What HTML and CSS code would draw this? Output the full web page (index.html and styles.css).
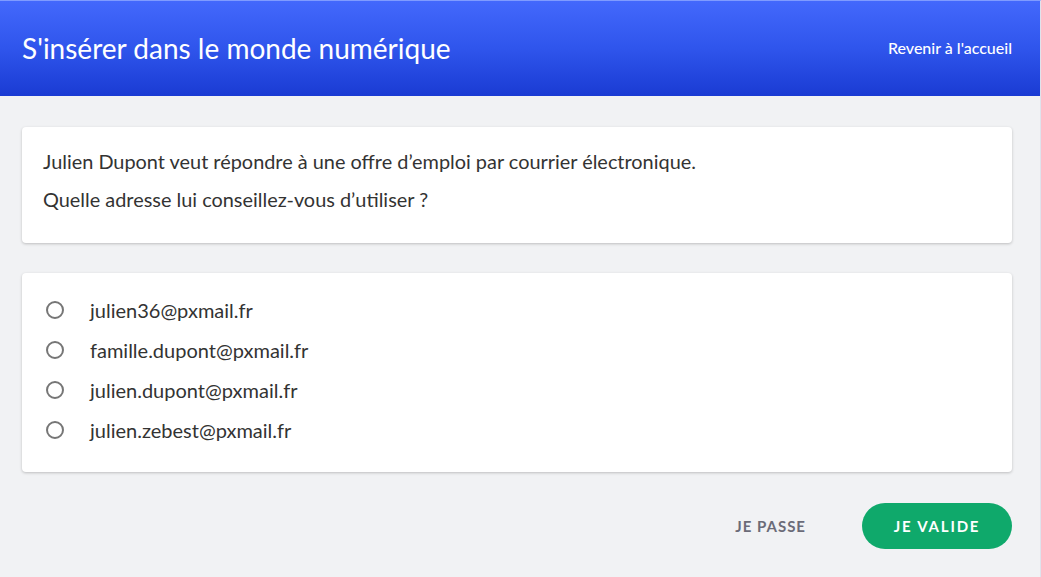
FILE: index.html
```html
<!DOCTYPE html>
<html lang="fr">
<head>
<meta charset="utf-8">
<title>S'insérer dans le monde numérique</title>
<link rel="stylesheet" href="styles.css">
</head>
<body>
<header class="topbar">
  <h1 class="topbar-title">S'insérer dans le monde numérique</h1>
  <a class="topbar-link" href="#">Revenir à l'accueil</a>
</header>
<main class="content">
  <section class="card question">
    <p>Julien Dupont veut répondre à une offre d’emploi par courrier électronique.</p>
    <p>Quelle adresse lui conseillez-vous d’utiliser ?</p>
  </section>
  <section class="card answers">
    <label class="option"><span class="radio"></span><span class="option-text">julien36@pxmail.fr</span></label>
    <label class="option"><span class="radio"></span><span class="option-text">famille.dupont@pxmail.fr</span></label>
    <label class="option"><span class="radio"></span><span class="option-text">julien.dupont@pxmail.fr</span></label>
    <label class="option"><span class="radio"></span><span class="option-text">julien.zebest@pxmail.fr</span></label>
  </section>
  <div class="actions">
    <button class="btn-skip">JE PASSE</button>
    <button class="btn-validate">JE VALIDE</button>
  </div>
</main>
</body>
</html>
```
FILE: styles.css
```css
* { box-sizing: border-box; }
html, body { margin: 0; padding: 0; }
body {
  font-family: Lato, "Open Sans", sans-serif;
  background: #f1f2f4;
  color: #333333;
  width: 1041px;
  height: 577px;
  overflow: hidden;
  border-top: 1px solid #7f9bff;
  border-right: 1px solid #dfe3ec;
}
.topbar {
  height: 95px;
  background: linear-gradient(180deg, #4368fc 0%, #2f55ec 50%, #1a3bd3 100%);
  display: flex;
  align-items: center;
  justify-content: space-between;
  padding: 0 28px 2px 22px;
}
.topbar-title {
  margin: 0;
  font-size: 28px;
  font-weight: 400;
  color: #ffffff;
}
.topbar-link {
  color: #ffffff;
  text-decoration: none;
  font-size: 16px;
  font-weight: 500;
}
.content {
  padding: 31px 28px 0 22px;
  display: flex;
  flex-direction: column;
  gap: 30px;
}
.card {
  background: #ffffff;
  border-radius: 4px;
  box-shadow: 0 1px 3px rgba(0, 0, 0, 0.22);
}
.question {
  padding: 22px 21px 18px;
}
.question p {
  margin: 0 0 14px;
  font-size: 19.9px;
  line-height: 24px;
  color: #333333;
}
.answers {
  padding: 17px 21px 22px 24px;
  display: flex;
  flex-direction: column;
}
.option {
  height: 40px;
  display: flex;
  align-items: center;
  gap: 26px;
  cursor: pointer;
}
.radio {
  width: 18px;
  height: 18px;
  border: 2px solid #767676;
  border-radius: 50%;
  flex: none;
}
.option-text {
  font-size: 20px;
  color: #333333;
}
.actions {
  margin-top: 1px;
  display: flex;
  justify-content: flex-end;
  align-items: center;
  gap: 26px;
}
.btn-skip {
  border: none;
  background: transparent;
  font-family: inherit;
  font-size: 15px;
  font-weight: 700;
  letter-spacing: 1px;
  color: #6b6b78;
  padding: 0 30px;
  height: 46px;
}
.btn-validate {
  border: none;
  background: #0fa96b;
  color: #ffffff;
  font-family: inherit;
  font-size: 15px;
  font-weight: 700;
  letter-spacing: 1.8px;
  width: 150px;
  height: 46px;
  border-radius: 23px;
}
```
